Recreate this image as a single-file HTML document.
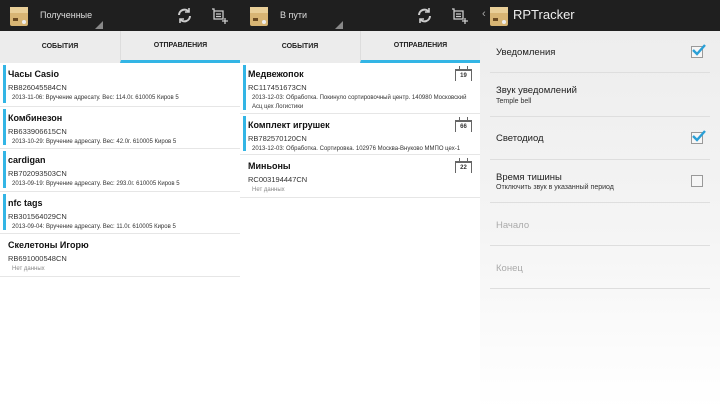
<!DOCTYPE html>
<html><head><meta charset="utf-8"><style>
*{margin:0;padding:0;box-sizing:border-box}
body{width:720px;height:409px;overflow:hidden;background:#fff;font-family:"Liberation Sans","DejaVu Sans",sans-serif;position:relative}
.a{position:absolute}
.bar{top:0;height:31px;background:#1f1f1f}
.tabs{top:31px;height:32px;background:#ececec}
.tab{position:absolute;top:0;height:32px;width:120px;text-align:center;font-size:7px;font-weight:bold;line-height:32px;color:#222}
.tab.on{border-bottom:3px solid #33b5e5;line-height:30px}
.it{position:absolute;left:0;width:240px;border-bottom:1px solid #e6e6e6}
.it .b{position:absolute;left:3px;top:2px;bottom:3px;width:3px;background:#33b5e5}
.t{position:absolute;left:8px;top:6px;font-size:9px;font-weight:bold;color:#111}
.n{position:absolute;left:8px;top:20px;font-size:7.5px;color:#333}
.d{position:absolute;left:12px;top:31px;font-size:6px;color:#333;line-height:9px;width:226px}
.nd{color:#888}
.cal{position:absolute;right:8px;top:6px;width:17px;height:12px;border:1px solid #666;border-bottom:none;border-top:2px solid #666;font-size:6px;font-weight:bold;text-align:center;line-height:10px;color:#333;background:#fff}
.cal:before,.cal:after{content:"";position:absolute;top:-5px;width:1px;height:4px;background:#666}
.cal:before{left:3px}.cal:after{right:3px}
.set{left:480px;top:31px;width:240px;height:378px;background:linear-gradient(#ededed,#f4f4f4 50%,#fff)}
.row{position:absolute;left:10px;width:220px;border-bottom:1px solid #dedede}
.st{position:absolute;left:6px;font-size:9.5px;color:#222}
.ss{position:absolute;left:6px;font-size:7px;color:#333}
.cb{position:absolute;left:201px;width:12px;height:12px;border:1px solid #999;background:#f6f6f6}
</style></head><body>
<div class="a bar" style="left:0;width:720px"></div>
<svg class="a" style="left:10px;top:5px" width="18" height="22"><rect x="0" y="2" width="18" height="19" rx="2" fill="#d8b574"/><rect x="0" y="2" width="18" height="6" fill="#e9cf98"/><rect x="3" y="13" width="5" height="3" fill="#6b4b22"/><circle cx="14" cy="17" r="2" fill="#eee"/></svg>
<div class="a" style="left:40px;top:10px;color:#ddd;font-size:9px">Полученные</div>
<svg class="a" style="left:95px;top:21px" width="8" height="8"><path d="M8 0V8H0Z" fill="#888"/></svg>
<svg class="a" style="left:176px;top:7px" width="17" height="17" fill="none" stroke="#ccc" stroke-width="2"><path d="M3 8a5.5 5.5 0 0 1 10-3"/><path d="M14 9a5.5 5.5 0 0 1-10 3"/><path d="M13 1v4h-4M4 16v-4h4" stroke-width="1.6"/></svg>
<svg class="a" style="left:211px;top:8px" width="18" height="16" fill="none" stroke="#ccc" stroke-width="1.3"><path d="M1 1h2v2M3 3h9v8H3zM5 6h5M5 8.5h5"/><path d="M14 10v6M11 13h6"/></svg>

<svg class="a" style="left:250px;top:5px" width="18" height="22"><rect x="0" y="2" width="18" height="19" rx="2" fill="#d8b574"/><rect x="0" y="2" width="18" height="6" fill="#e9cf98"/><rect x="3" y="13" width="5" height="3" fill="#6b4b22"/><circle cx="14" cy="17" r="2" fill="#eee"/></svg>
<div class="a" style="left:280px;top:10px;color:#ddd;font-size:9px">В пути</div>
<svg class="a" style="left:335px;top:21px" width="8" height="8"><path d="M8 0V8H0Z" fill="#888"/></svg>
<svg class="a" style="left:416px;top:7px" width="17" height="17" fill="none" stroke="#ccc" stroke-width="2"><path d="M3 8a5.5 5.5 0 0 1 10-3"/><path d="M14 9a5.5 5.5 0 0 1-10 3"/><path d="M13 1v4h-4M4 16v-4h4" stroke-width="1.6"/></svg>
<svg class="a" style="left:451px;top:8px" width="18" height="16" fill="none" stroke="#ccc" stroke-width="1.3"><path d="M1 1h2v2M3 3h9v8H3zM5 6h5M5 8.5h5"/><path d="M14 10v6M11 13h6"/></svg>

<div class="a" style="left:482px;top:8px;color:#aaa;font-size:11px">‹</div>
<svg class="a" style="left:490px;top:5px" width="18" height="22"><rect x="0" y="2" width="18" height="19" rx="2" fill="#d8b574"/><rect x="0" y="2" width="18" height="6" fill="#e9cf98"/><rect x="3" y="13" width="5" height="3" fill="#6b4b22"/><circle cx="14" cy="17" r="2" fill="#eee"/></svg>
<div class="a" style="left:513px;top:7px;color:#eee;font-size:13px">RPTracker</div>

<div class="a tabs" style="left:0;width:480px">
<div class="tab" style="left:0">СОБЫТИЯ</div>
<div class="tab on" style="left:120px;border-left:1px solid #ddd">ОТПРАВЛЕНИЯ</div>
<div class="tab" style="left:240px">СОБЫТИЯ</div>
<div class="tab on" style="left:360px;border-left:1px solid #ddd">ОТПРАВЛЕНИЯ</div>
</div>

<div class="it" style="top:63px;height:44px"><div class="b"></div><div class="t">Часы Casio</div><div class="n">RB826045584CN</div><div class="d">2013-11-06: Вручение адресату. Вес: 114.0г. 610005 Киров 5</div></div>
<div class="it" style="top:107px;height:42px"><div class="b"></div><div class="t">Комбинезон</div><div class="n">RB633906615CN</div><div class="d">2013-10-29: Вручение адресату. Вес: 42.0г. 610005 Киров 5</div></div>
<div class="it" style="top:149px;height:43px"><div class="b"></div><div class="t">cardigan</div><div class="n">RB702093503CN</div><div class="d">2013-09-19: Вручение адресату. Вес: 293.0г. 610005 Киров 5</div></div>
<div class="it" style="top:192px;height:42px"><div class="b"></div><div class="t">nfc tags</div><div class="n">RB301564029CN</div><div class="d">2013-09-04: Вручение адресату. Вес: 11.0г. 610005 Киров 5</div></div>
<div class="it" style="top:234px;height:43px"><div class="t">Скелетоны Игорю</div><div class="n">RB691000548CN</div><div class="d nd">Нет данных</div></div>

<div class="it" style="left:240px;top:63px;height:51px"><div class="b"></div><div class="t">Медвежопок</div><div class="cal">19</div><div class="n">RC117451673CN</div><div class="d">2013-12-03: Обработка. Покинуло сортировочный центр. 140980 Московский Асц цех Логистики</div></div>
<div class="it" style="left:240px;top:114px;height:41px"><div class="b"></div><div class="t">Комплект игрушек</div><div class="cal">66</div><div class="n">RB782570120CN</div><div class="d">2013-12-03: Обработка. Сортировка. 102976 Москва-Внуково ММПО цех-1</div></div>
<div class="it" style="left:240px;top:155px;height:43px"><div class="t">Миньоны</div><div class="cal">22</div><div class="n">RC003194447CN</div><div class="d nd">Нет данных</div></div>

<div class="a set">
<div class="row" style="top:0;height:42px"><div class="st" style="top:16px">Уведомления</div><div class="cb" style="top:15px"></div><svg class="a" style="left:202px;top:13px" width="14" height="12"><path d="M1 6l4 4 8-9" fill="none" stroke="#2a9fd6" stroke-width="2.4"/></svg></div>
<div class="row" style="top:42px;height:44px"><div class="st" style="top:12px">Звук уведомлений</div><div class="ss" style="top:25px">Temple bell</div></div>
<div class="row" style="top:86px;height:43px"><div class="st" style="top:16px">Светодиод</div><div class="cb" style="top:15px"></div><svg class="a" style="left:202px;top:13px" width="14" height="12"><path d="M1 6l4 4 8-9" fill="none" stroke="#2a9fd6" stroke-width="2.4"/></svg></div>
<div class="row" style="top:129px;height:43px"><div class="st" style="top:12px">Время тишины</div><div class="ss" style="top:24px">Отключить звук в указанный период</div><div class="cb" style="top:15px"></div></div>
<div class="row" style="top:172px;height:43px"><div class="st" style="top:17px;color:#aaa">Начало</div></div>
<div class="row" style="top:215px;height:43px"><div class="st" style="top:17px;color:#aaa">Конец</div></div>
</div>
</body></html>
